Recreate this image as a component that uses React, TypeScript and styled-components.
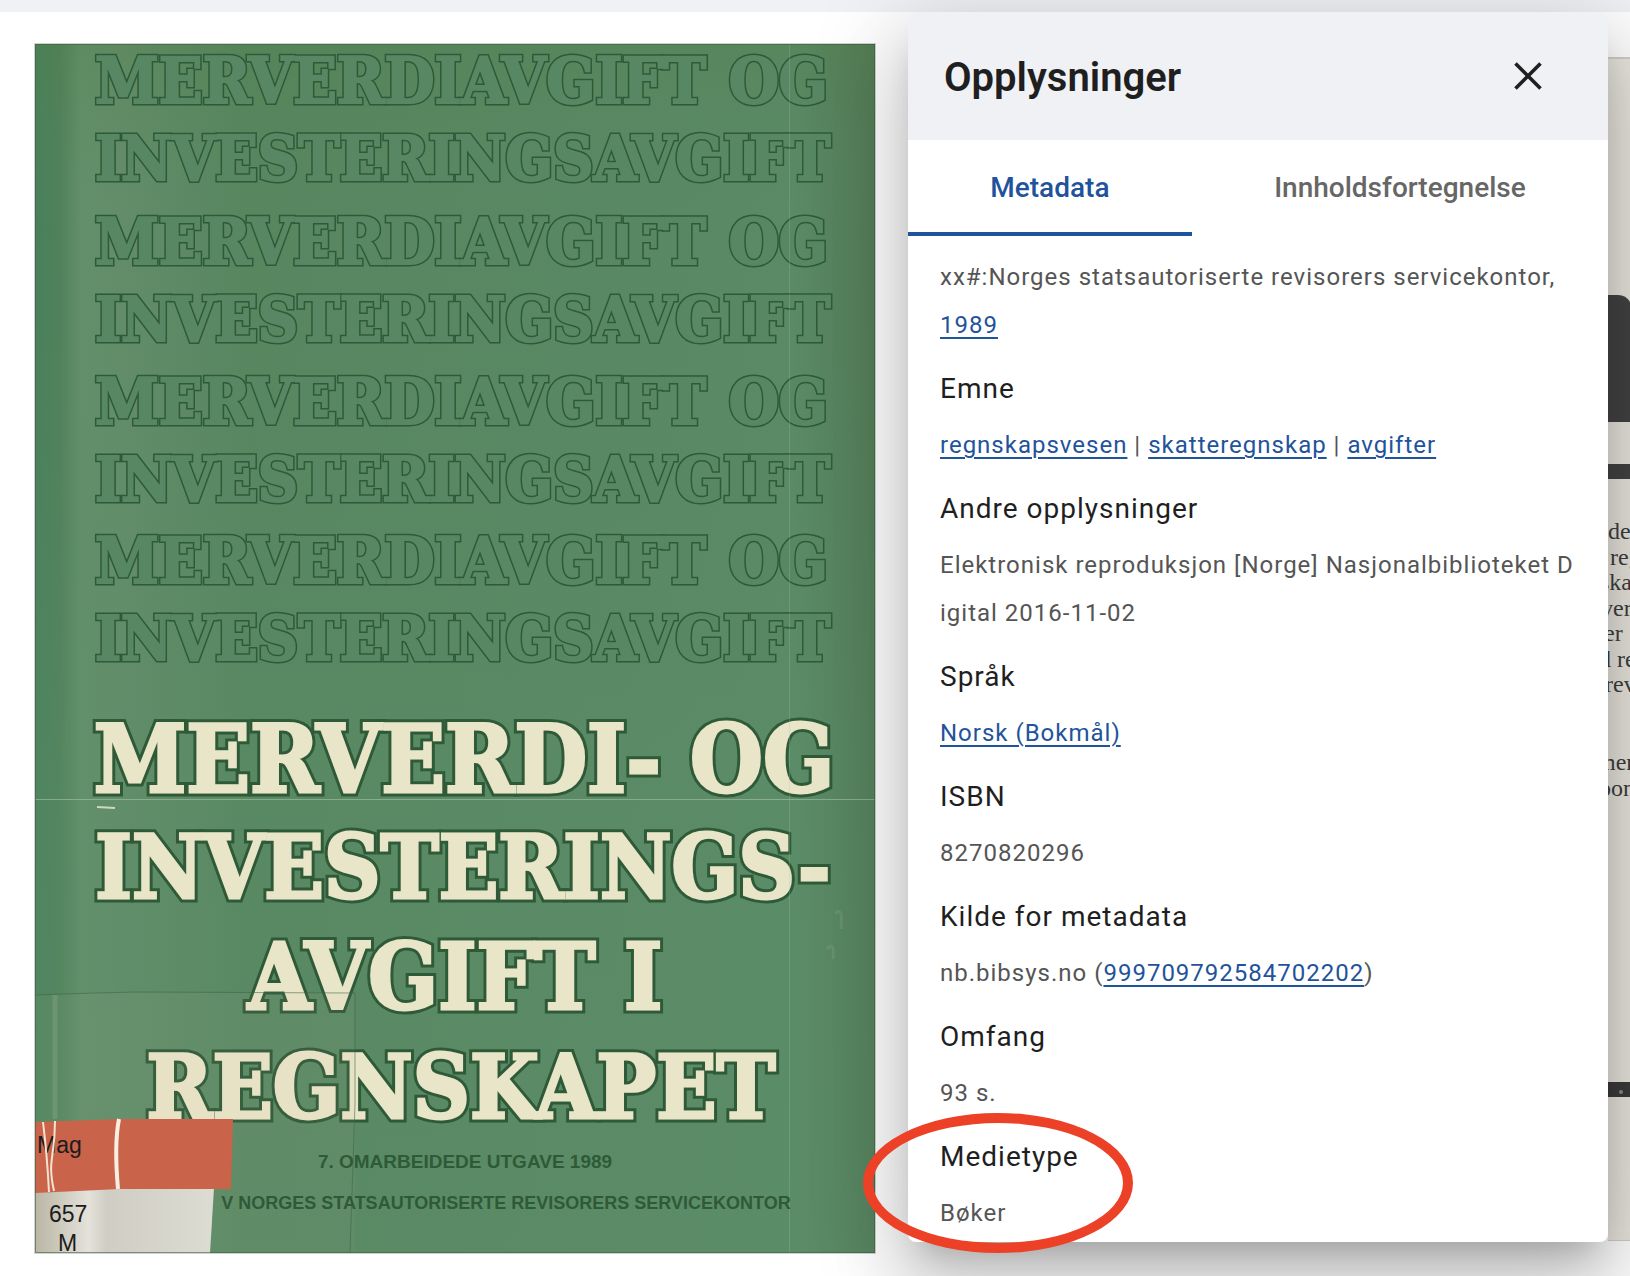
import React from "react";
import styled, { createGlobalStyle } from "styled-components";

const GlobalStyle = createGlobalStyle`
  *, *::before, *::after { box-sizing: border-box; }
  body {
    margin: 0;
    background: #fff;
    color: #1f1f1f;
    font-family: Roboto, "Liberation Sans", sans-serif;
  }
`;

const Screen = styled.div`
  display: flex;
  flex-direction: column;
  min-height: 100vh;
  overflow: hidden;
`;

const TopBar = styled.header`
  height: 12px;
  background: #f0f1f5;
`;

const Viewer = styled.main`
  flex: 1;
  display: grid;
  grid-template-columns: 842fr 732fr 22px;
  align-items: start;
  padding: 0 0 22px 34px;
`;

const CoverFrame = styled.figure`
  margin: 31px 0 0;
  border: 1px solid #cfd2cf;
  line-height: 0;
`;

const Drawing = styled.svg`
  display: block;
  width: 100%;
  height: auto;
`;

const NextPage = styled.div`
  margin-top: 45px;
  border-top: 2px solid #cfcfcf;
  border-bottom: 1px solid #cfcfcf;
`;

const Panel = styled.aside`
  position: relative;
  z-index: 1;
  margin-left: 32px;
  border-radius: 8px;
  background: #fff;
  box-shadow:
    0 22px 30px -14px rgba(0, 0, 0, 0.2),
    0 48px 76px 6px rgba(0, 0, 0, 0.14),
    0 18px 92px 16px rgba(0, 0, 0, 0.12);
`;

const PanelHeader = styled.div`
  display: flex;
  align-items: center;
  justify-content: space-between;
  height: 128px;
  padding: 0 52px 0 36px;
  border-radius: 8px 8px 0 0;
  background: #f0f1f5;
`;

const PanelTitle = styled.h2`
  margin: 0;
  padding-top: 4px;
  font-size: 40px;
  line-height: 48px;
  font-weight: 600;
`;

const CloseButton = styled.button`
  display: grid;
  place-items: center;
  width: 56px;
  height: 56px;
  padding: 0;
  border: 0;
  background: none;
  color: #1f1f1f;
  cursor: pointer;
`;

const Tabs = styled.div`
  display: flex;
  height: 96px;
`;

const Tab = styled.button<{ $active?: boolean }>`
  flex: 1 1 auto;
  padding: 2px 0 0;
  border: 0;
  border-bottom: 4px solid ${(p) => (p.$active ? "#1f539b" : "transparent")};
  background: none;
  color: ${(p) => (p.$active ? "#1f539b" : "#666")};
  font-family: inherit;
  font-size: 28px;
  font-weight: 500;
  cursor: pointer;
`;

const Metadata = styled.dl`
  margin: 0;
  padding: 17px 32px 5px;
  letter-spacing: 1px;
`;

const Entry = styled.div`
  position: relative;
`;

const Term = styled.dt`
  padding: 16px 0 8px;
  font-size: 28px;
  line-height: 48px;
`;

const Value = styled.dd`
  margin: 0;
  color: #555;
  font-size: 24px;
  line-height: 48px;
  word-break: break-all;
`;

const Link = styled.a`
  color: #1f539b;
  text-decoration: underline;
  text-decoration-thickness: 2px;
  text-underline-offset: 4px;
`;

const Marker = styled.span`
  position: absolute;
  top: -4px;
  left: -77px;
  width: 270px;
  height: 140px;
  border: 10px solid #ec4127;
  border-radius: 50%;
  pointer-events: none;
`;

const OutlineBase = styled.text`
  fill: #2f5a38;
  stroke: #2f5a38;
  stroke-width: 5px;
  stroke-linejoin: miter;
  font-family: "DejaVu Serif Condensed", "DejaVu Serif", serif;
  font-weight: 700;
`;

const OutlineTop = styled(OutlineBase)`
  fill: #588863;
  stroke: #588863;
  stroke-width: 2px;
`;

const TitleBase = styled(OutlineBase)`
  stroke-width: 9px;
`;

const TitleTop = styled(OutlineBase)`
  fill: #e9e5c8;
  stroke: #e9e5c8;
  stroke-width: 3px;
`;

const Imprint = styled.text`
  fill: #2f5a38;
  font-family: "Liberation Sans", sans-serif;
  font-weight: 700;
`;

const ShelfMark = styled.text`
  fill: #1c1c1c;
  font: 400 23px "Liberation Sans", sans-serif;
`;

const BodyType = styled.text`
  fill: #3f3f40;
  font: 400 24px "Liberation Serif", serif;
`;

const outlineRows = [
  { y: 59, words: ["MERVERDIAVGIFT", "OG"] },
  { y: 136, words: ["INVESTERINGSAVGIFT"] },
  { y: 220, words: ["MERVERDIAVGIFT", "OG"] },
  { y: 297, words: ["INVESTERINGSAVGIFT"] },
  { y: 380, words: ["MERVERDIAVGIFT", "OG"] },
  { y: 457, words: ["INVESTERINGSAVGIFT"] },
  { y: 539, words: ["MERVERDIAVGIFT", "OG"] },
  { y: 616, words: ["INVESTERINGSAVGIFT"] },
];

const titleRows = [
  { x: 429, y: 748, size: 93, text: "MERVERDI- OG" },
  { x: 428, y: 854, size: 87, text: "INVESTERINGS-" },
  { x: 420, y: 965, size: 91, text: "AVGIFT I" },
  { x: 426, y: 1074, size: 88, text: "REGNSKAPET" },
];

const pageLines = [
  { x: 0, y: 480, text: "de" },
  { x: 2, y: 506, text: "reg" },
  { x: -8, y: 531, text: "ska" },
  { x: -7, y: 557, text: "ver" },
  { x: -4, y: 582, text: "er" },
  { x: -9, y: 608, text: "d re" },
  { x: -3, y: 633, text: "rev" },
  { x: -11, y: 711, text: "mer" },
  { x: -9, y: 737, text: "pon" },
];

function Cover() {
  return (
    <Drawing viewBox="0 0 840 1209" role="img" aria-label="Merverdi- og investeringsavgift i regnskapet">
      <defs>
        <linearGradient id="cloth" x1="0" x2="1" y1="0" y2="0">
          <stop offset="0" stopColor="#48805a" />
          <stop offset="0.03" stopColor="#50815a" />
          <stop offset="0.055" stopColor="#63906a" />
          <stop offset="0.1" stopColor="#638d69" />
          <stop offset="0.25" stopColor="#57865f" />
          <stop offset="0.9" stopColor="#5a8a66" />
          <stop offset="1" stopColor="#547d58" />
        </linearGradient>
        <linearGradient id="lower" x1="0" x2="0" y1="0" y2="1">
          <stop offset="0" stopColor="#527d45" stopOpacity="0.25" />
          <stop offset="0.15" stopColor="#588863" stopOpacity="0" />
          <stop offset="0.6" stopColor="#5d906b" stopOpacity="0.3" />
          <stop offset="1" stopColor="#5d906b" stopOpacity="0.4" />
        </linearGradient>
        <linearGradient id="paper" x1="0" x2="1" y1="0" y2="0">
          <stop offset="0" stopColor="#b9b6a4" />
          <stop offset="0.3" stopColor="#e4e2da" />
          <stop offset="0.4" stopColor="#cfcdc4" />
          <stop offset="1" stopColor="#dddcd2" />
        </linearGradient>
      </defs>
      <rect width="840" height="1209" fill="url(#cloth)" />
      <rect width="840" height="1209" fill="url(#lower)" />

      {outlineRows.map((row) =>
        row.words.map((word) => {
          const og = word === "OG";
          const x = og ? 793 : 60;
          const anchor = og ? "end" : "start";
          const size = word === "INVESTERINGSAVGIFT" ? 62 : 64;
          return (
            <g key={`${row.y}-${word}`}>
              <OutlineBase x={x} y={row.y} textAnchor={anchor} fontSize={size}>{word}</OutlineBase>
              <OutlineTop x={x} y={row.y} textAnchor={anchor} fontSize={size} aria-hidden="true">{word}</OutlineTop>
            </g>
          );
        })
      )}

      {titleRows.map((row) => (
        <g key={row.text} textAnchor="middle">
          <TitleBase x={row.x} y={row.y} fontSize={row.size}>{row.text}</TitleBase>
          <TitleTop x={row.x} y={row.y} fontSize={row.size} aria-hidden="true">{row.text}</TitleTop>
        </g>
      ))}

      <path d="M0 951 L60 949 L100 948 L320 949 V1209 H0 Z" fill="#c5b99a" opacity="0.06" />
      <path d="M0 951 L60 949 L100 948 L320 949 V1060 L315 1209" fill="none" stroke="#3d6345" strokeOpacity="0.55" />
      <path d="M0 755.5 H840" stroke="#a9c3a6" strokeOpacity="0.6" />
      <path d="M754.5 0 V1209" stroke="#a9c3a6" strokeOpacity="0.25" />
      <path d="M62 763 L80 764" stroke="#cfd8bd" strokeWidth="2" />
      <path d="M800 870 Q808 860 806 885 M792 905 Q800 896 798 915" fill="none" stroke="#86a587" strokeOpacity="0.3" strokeWidth="3" />
      <path d="M20 951 V1075" stroke="#86a587" strokeOpacity="0.4" strokeWidth="5" />

      <Imprint x="430" y="1124" textAnchor="middle" fontSize="19">7. OMARBEIDEDE UTGAVE 1989</Imprint>
      <Imprint x="471" y="1165" textAnchor="middle" fontSize="18">V NORGES STATSAUTORISERTE REVISORERS SERVICEKONTOR</Imprint>

      <path d="M0 1140 L179 1144 L175 1209 H0 Z" fill="url(#paper)" />
      <path d="M0 1078 L85 1075 L198 1075 L196 1145 L85 1145 L0 1149 Z" fill="#c9634a" />
      <ShelfMark x="2" y="1109">Mag</ShelfMark>
      <ShelfMark x="14" y="1178">657</ShelfMark>
      <ShelfMark x="23" y="1207">M</ShelfMark>
      <path d="M8 1078 Q12 1110 14 1148 M20 1077 C20 1115 12 1115 19 1147" fill="none" stroke="#f3e3d2" strokeWidth="2" />
      <path d="M84 1075 Q79 1100 83 1145" fill="none" stroke="#f7efe4" strokeWidth="4" />
      <rect x="0" y="0" width="840" height="1209" fill="none" stroke="#3d5f45" strokeOpacity="0.6" strokeWidth="2" />
    </Drawing>
  );
}

function TextPage() {
  return (
    <Drawing viewBox="0 0 22 1181" role="img" aria-label="Side 1">
      <rect width="22" height="1181" fill="#e9e7de" />
      <path d="M0 236 H10 Q18 236 22 243 V363 H0 Z" fill="#434343" />
      <rect y="405" width="22" height="15" fill="#434345" />
      <rect y="1023" width="22" height="15" fill="#3b3b3c" />
      <circle cx="13" cy="1033" r="2" fill="#8a8a88" />
      {pageLines.map((line) => (
        <BodyType key={line.y} x={line.x} y={line.y}>{line.text}</BodyType>
      ))}
    </Drawing>
  );
}

export default function App() {
  return (
    <>
      <GlobalStyle />
      <Screen>
        <TopBar />
        <Viewer>
          <CoverFrame>
            <Cover />
          </CoverFrame>

          <Panel aria-labelledby="panel-title">
            <PanelHeader>
              <PanelTitle id="panel-title">Opplysninger</PanelTitle>
              <CloseButton type="button" aria-label="Lukk">
                <svg width="28" height="28" viewBox="0 0 28 28" fill="none" stroke="currentColor" strokeWidth="3.6">
                  <path d="M1.5 1.5 L26.5 26.5 M26.5 1.5 L1.5 26.5" />
                </svg>
              </CloseButton>
            </PanelHeader>
            <Tabs role="tablist">
              <Tab type="button" role="tab" aria-selected="true" $active>Metadata</Tab>
              <Tab type="button" role="tab" aria-selected="false">Innholdsfortegnelse</Tab>
            </Tabs>
            <Metadata>
              <Entry>
                <Value>
                  xx#:Norges statsautoriserte revisorers servicekontor, <Link href="#1989">1989</Link>
                </Value>
              </Entry>
              <Entry>
                <Term>Emne</Term>
                <Value>
                  <Link href="#regnskapsvesen">regnskapsvesen</Link> | <Link href="#skatteregnskap">skatteregnskap</Link> |{" "}
                  <Link href="#avgifter">avgifter</Link>
                </Value>
              </Entry>
              <Entry>
                <Term>Andre opplysninger</Term>
                <Value>Elektronisk reproduksjon [Norge] Nasjonalbiblioteket Digital 2016-11-02</Value>
              </Entry>
              <Entry>
                <Term>Språk</Term>
                <Value><Link href="#nob">Norsk (Bokmål)</Link></Value>
              </Entry>
              <Entry>
                <Term>ISBN</Term>
                <Value>8270820296</Value>
              </Entry>
              <Entry>
                <Term>Kilde for metadata</Term>
                <Value>nb.bibsys.no (<Link href="#kilde">999709792584702202</Link>)</Value>
              </Entry>
              <Entry>
                <Term>Omfang</Term>
                <Value>93 s.</Value>
              </Entry>
              <Entry>
                <Term>Medietype</Term>
                <Value>Bøker</Value>
                <Marker aria-hidden="true" />
              </Entry>
            </Metadata>
          </Panel>

          <NextPage>
            <TextPage />
          </NextPage>
        </Viewer>
      </Screen>
    </>
  );
}
